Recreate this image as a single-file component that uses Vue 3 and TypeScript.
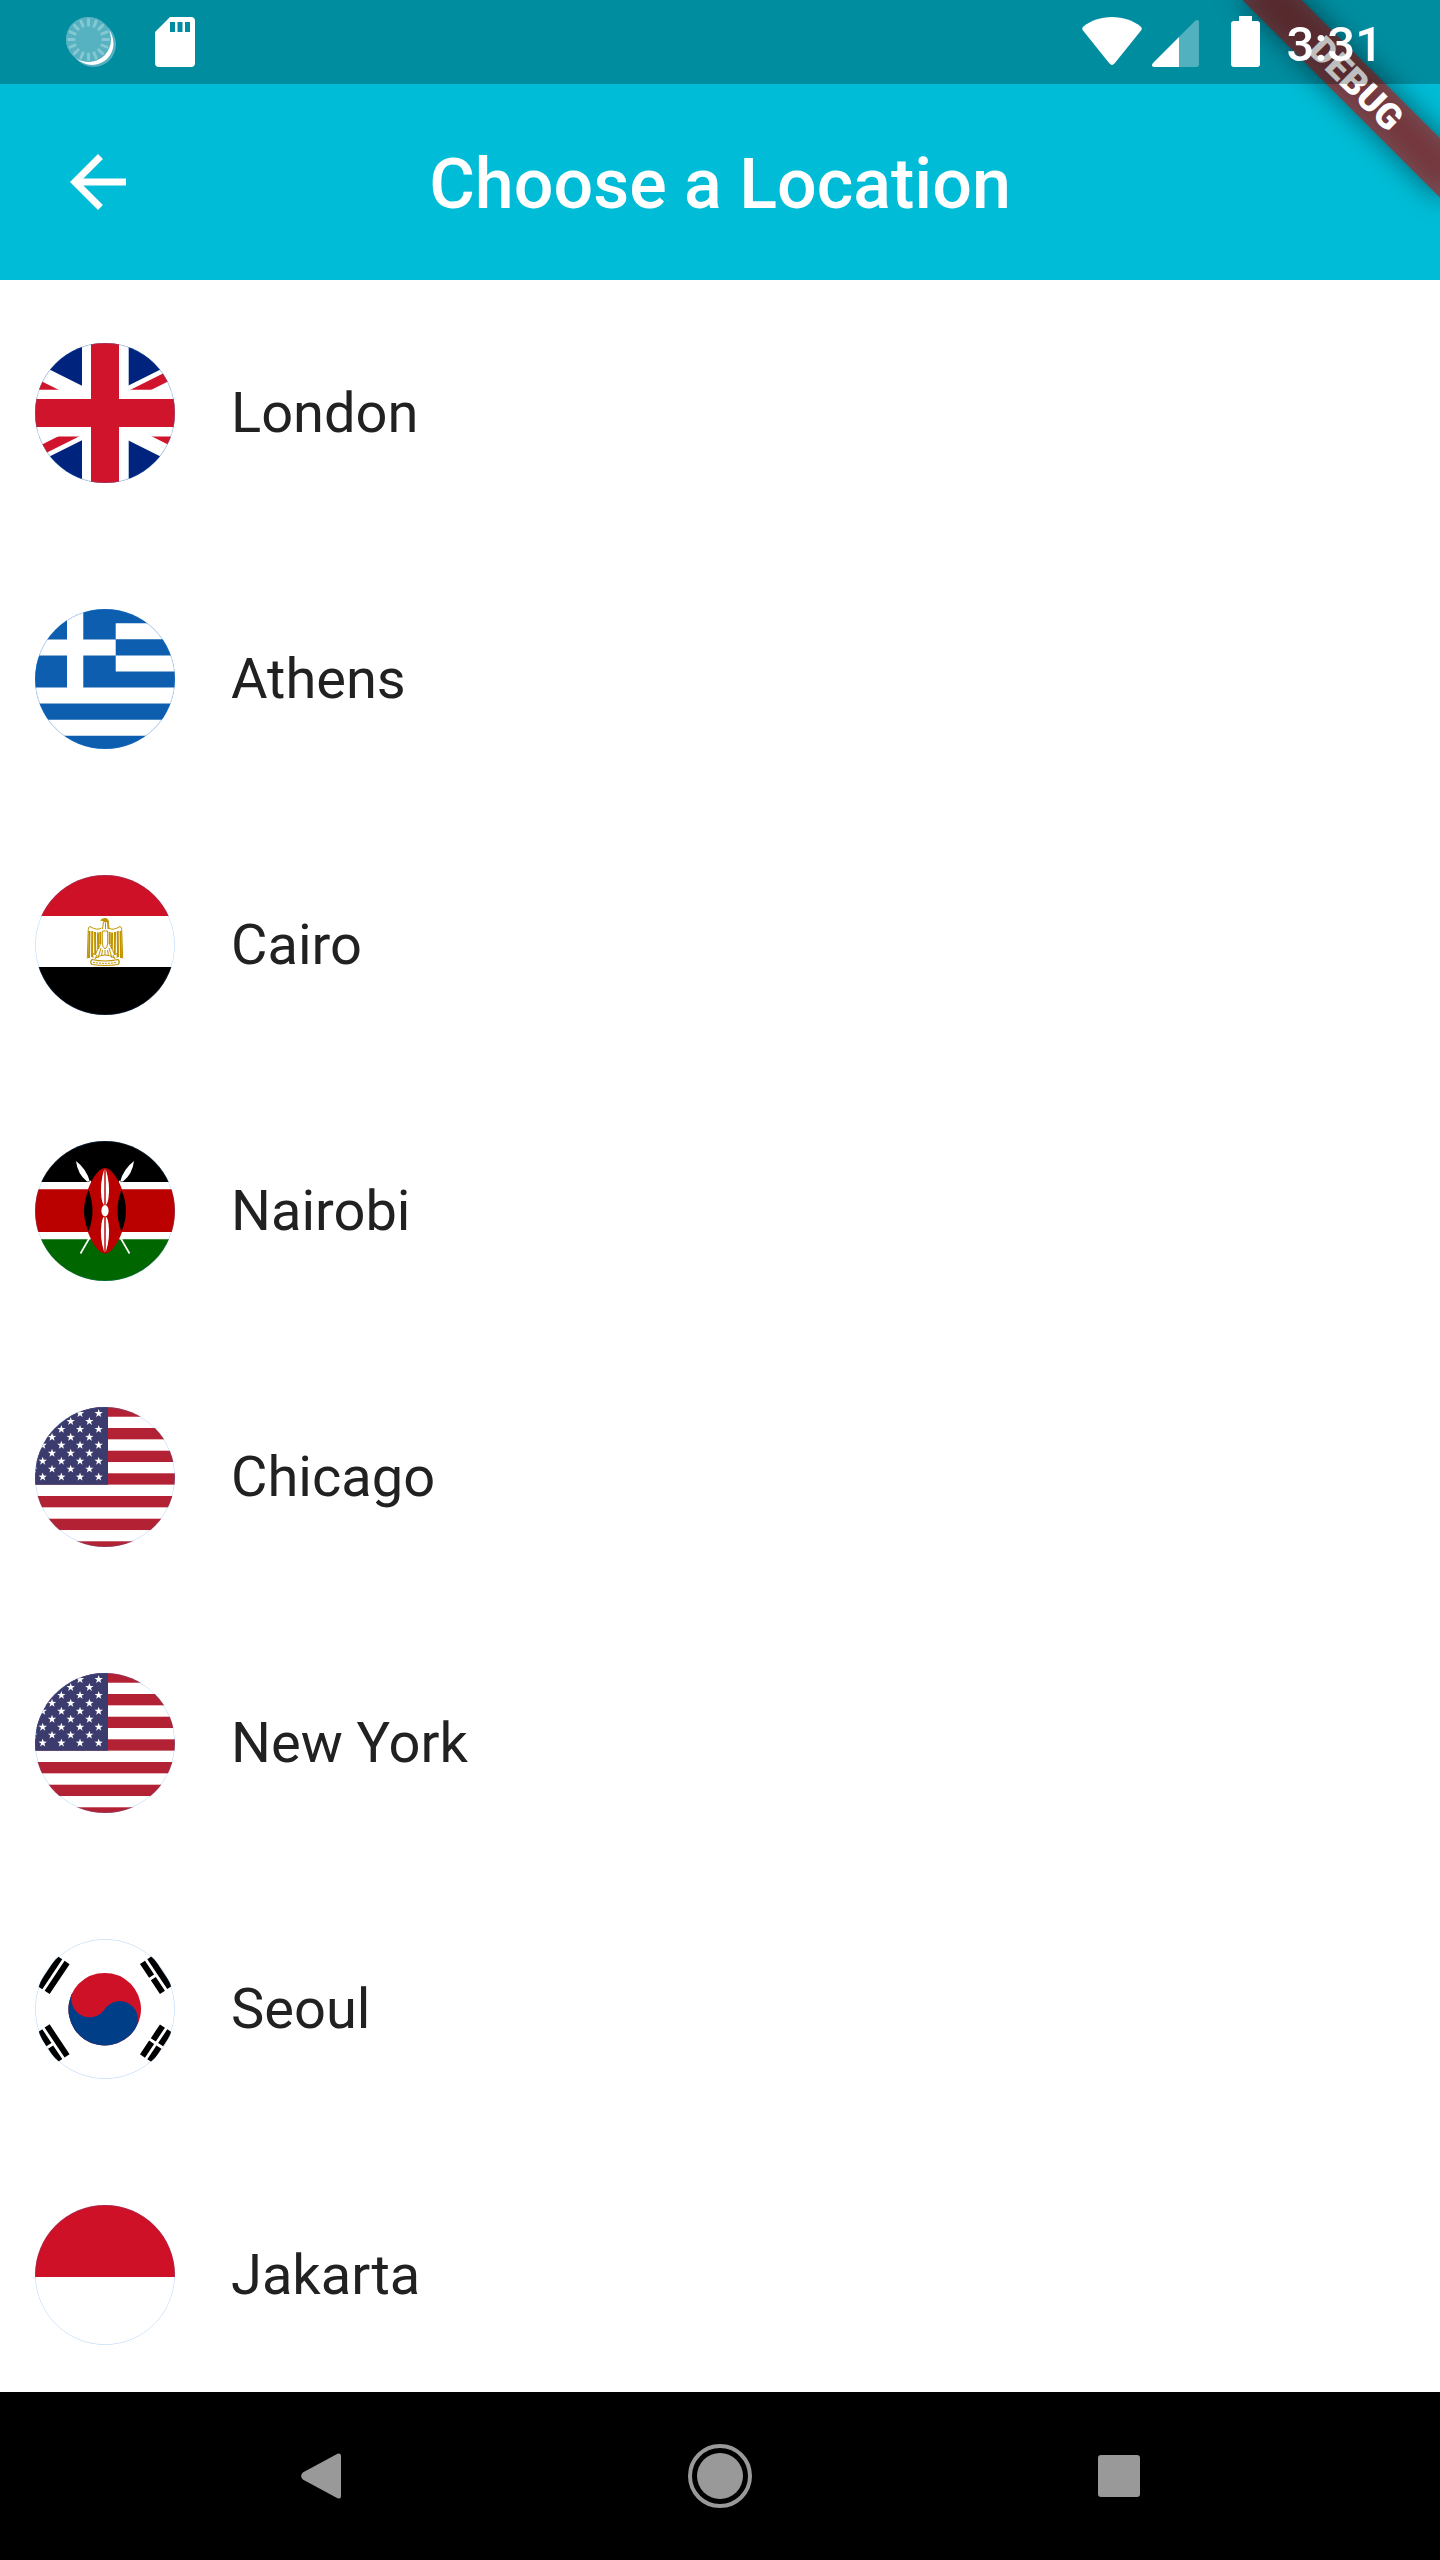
<script setup lang="ts">
type Flag = 'uk' | 'greece' | 'egypt' | 'kenya' | 'usa' | 'korea' | 'indonesia'

interface Place {
  name: string
  flag: Flag
}

interface Point {
  x: number
  y: number
}

const places: Place[] = [
  { name: 'London', flag: 'uk' },
  { name: 'Athens', flag: 'greece' },
  { name: 'Cairo', flag: 'egypt' },
  { name: 'Nairobi', flag: 'kenya' },
  { name: 'Chicago', flag: 'usa' },
  { name: 'New York', flag: 'usa' },
  { name: 'Seoul', flag: 'korea' },
  { name: 'Jakarta', flag: 'indonesia' },
]

// Staggered grid of stars that fills the canton
const stars: Point[] = []
for (let row = 0; row < 9; row++) {
  for (let col = -1; col < 7; col++) {
    if ((row + col) % 2 === 0) stars.push({ x: 7.7 + col * 9.33, y: 6.4 + row * 7.95 })
  }
}

const starPoints = Array.from({ length: 10 }, (_, i) => {
  const radius = i % 2 === 0 ? 4.4 : 1.75
  const angle = (i * Math.PI) / 5
  return `${(radius * Math.sin(angle)).toFixed(2)},${(-radius * Math.cos(angle)).toFixed(2)}`
}).join(' ')

const redStripes = [-1.6, 21, 43.7, 66.3, 89, 111.7, 134.3]
const rays = Array.from({ length: 16 }, (_, i) => i * 22.5)
</script>

<template>
  <div class="screen">
    <div class="status">
      <svg class="status-icon" width="50" height="52" viewBox="66 16 50 52" aria-hidden="true">
        <path d="M88.5 39.5L93.5 44.5" stroke="#56b1c0" stroke-width="45" stroke-linecap="round" />
        <circle cx="92" cy="43.5" r="21.5" fill="#fff" />
        <circle cx="88.5" cy="39.5" r="22.5" fill="#56b1c0" />
        <g stroke="#86c8d2" stroke-width="3" stroke-linecap="round">
          <path v-for="angle in rays" :key="angle" d="M88.5 25v-5.5" :transform="`rotate(${angle} 88.5 39.5)`" />
        </g>
      </svg>
      <svg class="status-icon sd" width="40" height="52" viewBox="155 16 40 52" aria-hidden="true">
        <path fill="#fff" fill-rule="evenodd" d="M170 17h21a4 4 0 0 1 4 4v42a4 4 0 0 1-4 4h-32a4 4 0 0 1-4-4V32zM170 22v10h5V22zM177.5 22v10h5V22zM185 22v10h5V22z" />
      </svg>
      <span class="spacer"></span>
      <svg class="status-icon" width="60" height="52" viewBox="1082 16 60 52" aria-hidden="true">
        <path fill="#fff" d="M1083 30.5Q1081.300 28.3 1083.500 26.5C1091 20.5 1101 17 1112 17S1133 20.5 1140.500 26.5Q1142.700 28.3 1141 30.5L1114.300 63.8Q1112 66 1109.700 63.8z" />
      </svg>
      <svg class="status-icon signal" width="48" height="52" viewBox="1152 16 48 52" aria-hidden="true">
        <path fill="#fff" fill-opacity=".32" d="M1179 37L1195 21Q1199 18 1199 23V64Q1199 67 1196 67H1179z" />
        <path fill="#fff" d="M1179 37V67H1154Q1150.500 66.5 1153 63z" />
      </svg>
      <svg class="status-icon battery" width="29" height="52" viewBox="1231 16 29 52" aria-hidden="true">
        <path fill="#fff" d="M1239 16h13v5h5a3 3 0 0 1 3 3v40a3 3 0 0 1-3 3h-23a3 3 0 0 1-3-3V24a3 3 0 0 1 3-3h5z" />
      </svg>
      <time class="clock">3:31</time>
    </div>

    <header class="app-bar">
      <button class="back" type="button" aria-label="Back">
        <svg width="84" height="84" viewBox="0 0 24 24" aria-hidden="true">
          <path fill="#fff" d="M20 11H7.83l5.59-5.59L12 4l-8 8 8 8 1.41-1.41L7.83 13H20v-2z" />
        </svg>
      </button>
      <h1 class="title">Choose a Location</h1>
    </header>

    <div class="ribbon-corner">
      <div class="ribbon"><span class="ribbon-text">DEBUG</span></div>
    </div>

    <ul class="places">
      <li v-for="place in places" :key="place.name">
        <button class="place" type="button">
          <svg class="flag" width="140" height="140" viewBox="0 0 140 140" aria-hidden="true">
            <g v-if="place.flag === 'uk'">
              <path fill="#00247d" d="M0 0h140v140H0z" />
              <path stroke="#fff" stroke-width="28" d="M-70 0L210 140M210 0L-70 140" />
              <path fill="#cf142b" d="M-70 0L70 70V80.4L-70 10.4zM210 0L70 70V59.6L210 -10.4zM210 140L70 70V59.6L210 129.6zM-70 140L70 70V80.4L-70 150.4z" />
              <path fill="#fff" d="M47 0h46.7v46.7H140v46.7H93.7V140H47V93.4H0V46.7h47z" />
              <path fill="#cf142b" d="M56 0h28v56h56v28H84v56H56V84H0V56h56z" />
            </g>
            <g v-else-if="place.flag === 'greece'">
              <path fill="#0d5eaf" d="M0 0h140v140H0z" />
              <path fill="#fff" d="M80.7 14.3H140v16H80.7zM80.7 46.5H140v16H80.7zM0 78.6h140v16H0zM0 110.8h140v16H0zM32 0h16.3v30.5h32.4v16H48.3v32.2H32V46.5H0v-16h32z" />
            </g>
            <g v-else-if="place.flag === 'egypt'">
              <path fill="#fff" d="M0 0h140v140H0z" />
              <path fill="#ce1126" d="M0 0h140v41H0z" />
              <path d="M0 92h140v48H0z" />
              <g fill="none" stroke="#c09300" stroke-width="1">
                <path fill="#c09300" stroke="none" d="M65 45.5Q67 42.5 70.5 43Q73.5 43.5 74 47L73.5 54H72.5L72 47Q69.5 48.5 68.5 46.2z" />
                <path d="M68.5 46.5L67.5 54M70.5 48V54M73.8 50V54" />
                <path d="M66.5 53Q62 56 55 51.5Q53 52 53.2 57L52.3 83.5M73.5 53Q78 56 85 51.5Q87 52 86.800 57L87.7 83.5" />
                <path stroke-width="2" d="M54.5 56L54 83M57.3 56L57 82M60 57L60.3 80M62.9 57.5L63.2 74M65.3 57V69M85.5 56L86 83M82.7 56L83 82M80 57L79.7 80M77.1 57.5L76.8 74M74.7 57V69" />
                <path d="M67.3 56H72.7V68Q72.7 72 70 74Q67.3 72 67.3 68z" />
                <path d="M65.5 69L61 78M74.5 69L79 78M66 73L63 83M74 73L77 83M67.5 75L66.5 81M72.5 75L73.5 81M70 75V80" />
                <path d="M59 78Q57 80 58 83M81 78Q83 80 82 83M60.5 83Q70 77 79.5 83M62 80L60 84M78 80L80 84" />
                <path stroke-width="1.2" d="M57 84.5Q54.5 87 57 89.5Q70 91.5 83 89.5Q85.5 87 83 84.5Q70 87.5 57 84.5z" />
                <path stroke-dasharray="2 1" d="M58 87.3Q70 89.5 82 87.3" />
              </g>
            </g>
            <g v-else-if="place.flag === 'kenya'">
              <path fill="#fff" d="M0 0h140v140H0z" />
              <path d="M0 0h140v41H0z" />
              <path fill="#b00" d="M0 48.3h140v42.7H0z" />
              <path fill="#060" d="M0 98.3h140V140H0z" />
              <path stroke="#fff" stroke-width="1.7" d="M55 40L61 51M85 40L79 51M45.5 112.5L55 96M94.5 112.5L85 96" />
              <path fill="#fff" d="M41 20Q51.5 28 54.8 40.5H52Q42.5 33 41 20zM99 20Q88.5 28 85.2 40.5H88Q97.5 33 99 20z" />
              <path fill="#b00" d="M70 27C61 27 49 50 49 69.7S61 112.5 70 112.5S91 89 91 69.7S79 27 70 27z" />
              <path d="M53.5 49Q44.5 70 53.5 90.5Q61.5 70 53.5 49zM86.5 49Q95.5 70 86.5 90.5Q78.5 70 86.5 49z" />
              <path fill="#fff" d="M69.3 28V64Q67.5 63 66.5 57Q64.5 43 69.3 28zM70.7 28V64Q72.5 63 73.5 57Q75.5 43 70.7 28zM69.3 111.5V75.5Q67.5 76.5 66.5 82.5Q64.5 96.5 69.3 111.5zM70.7 111.5V75.5Q72.5 76.5 73.5 82.5Q75.5 96.5 70.7 111.5z" />
              <ellipse cx="70" cy="69.7" rx="3.6" ry="5.6" fill="#fff" />
            </g>
            <g v-else-if="place.flag === 'usa'">
              <path fill="#fff" d="M0 0h140v140H0z" />
              <rect v-for="top in redStripes" :key="top" x="0" :y="top" width="140" height="11.33" fill="#b22234" />
              <path fill="#3c3b6e" d="M0 0h73v77.7H0z" />
              <polygon v-for="(star, i) in stars" :key="i" :points="starPoints" :transform="`translate(${star.x} ${star.y})`" fill="#fff" />
            </g>
            <g v-else-if="place.flag === 'korea'">
              <path fill="#fff" d="M0 0h140v140H0z" />
              <g transform="translate(69.7 70.2) rotate(33.69)">
                <circle r="36.3" fill="#ce1126" />
                <path fill="#003f87" d="M-36.3 0A36.3 36.3 0 0 0 36.3 0A18.15 18.15 0 0 0 0 0A18.15 18.15 0 0 1 -36.3 0z" />
                <path d="M-60.2 -18h6v36h-6zM-69 -18h6v36h-6zM54.4 -18h6v16.5h-6zM54.4 1.5h6V18h-6zM63.2 -18h6v16.5h-6zM63.2 1.5h6V18h-6z" />
              </g>
              <g transform="translate(69.7 70.2) rotate(-33.69)">
                <path d="M-60.2 -18h6v36h-6zM-69 -18h6v16.5h-6zM-69 1.5h6V18h-6zM54.4 -18h6v16.5h-6zM54.4 1.5h6V18h-6zM63.2 -18h6v36h-6z" />
              </g>
            </g>
            <g v-else>
              <path fill="#fff" d="M0 0h140v140H0z" />
              <path fill="#ce1126" d="M0 0h140v72H0z" />
            </g>
            <circle cx="70" cy="70" r="69.7" fill="none" stroke="#2080e0" stroke-opacity=".3" stroke-width=".8" />
          </svg>
          <span>{{ place.name }}</span>
        </button>
      </li>
    </ul>

    <nav class="system-nav" aria-label="System">
      <button type="button" aria-label="Back">
        <svg width="64" height="64" viewBox="0 0 64 64" aria-hidden="true">
          <path fill="#999" d="M13.8 28.5L48.5 9.8Q52 8.5 52 12V52Q52 55.5 48.5 54.2L13.8 35.5Q10.5 32 13.8 28.5z" />
        </svg>
      </button>
      <button type="button" aria-label="Home">
        <svg width="64" height="64" viewBox="0 0 64 64" aria-hidden="true">
          <circle cx="32" cy="32" r="30" fill="none" stroke="#999" stroke-width="4" />
          <circle cx="32" cy="32" r="23" fill="#999" />
        </svg>
      </button>
      <button type="button" aria-label="Recent apps">
        <svg width="64" height="64" viewBox="0 0 64 64" aria-hidden="true">
          <rect x="11" y="11" width="42" height="42" rx="3" fill="#999" />
        </svg>
      </button>
    </nav>
  </div>
</template>

<style>
body {
  margin: 0;
}
</style>

<style scoped>
.screen {
  position: relative;
  display: flex;
  flex-direction: column;
  height: 100vh;
  overflow: hidden;
  background: #fff;
  color: #212121;
  font-family: Roboto, "Liberation Sans", sans-serif;
}

button {
  margin: 0;
  padding: 0;
  border: 0;
  background: none;
  color: inherit;
  font: inherit;
  cursor: pointer;
}

svg {
  display: block;
}

.status {
  position: relative;
  z-index: 2;
  display: flex;
  flex: none;
  align-items: center;
  box-sizing: border-box;
  height: 84px;
  margin-bottom: -84px;
  padding: 0 57px 0 66px;
  background: rgba(0, 0, 0, 0.25);
  color: #fff;
}

.status-icon {
  flex: none;
}

.sd {
  margin-left: 39px;
}

.spacer {
  flex: 1;
}

.signal {
  margin-left: 10px;
}

.battery {
  margin-left: 31px;
}

.clock {
  margin-left: 27px;
  padding-top: 6px;
  font-size: 49px;
  font-weight: 500;
  line-height: 56px;
}

.app-bar {
  display: grid;
  flex: none;
  grid-template-columns: 1fr auto 1fr;
  align-items: center;
  box-sizing: border-box;
  height: 280px;
  padding: 84px 56px 0;
  background: #00bcd6;
  color: #fff;
}

.back {
  justify-self: start;
}

.title {
  margin: 0;
  padding-top: 4px;
  font-size: 70px;
  font-weight: 500;
  line-height: 84px;
}

.ribbon-corner {
  position: absolute;
  z-index: 1;
  top: 0;
  right: 0;
  width: 280px;
  height: 280px;
  overflow: hidden;
  pointer-events: none;
}

.ribbon {
  position: absolute;
  top: 63px;
  right: -56px;
  width: 280px;
  height: 42px;
  transform: rotate(45deg);
}

.ribbon::before {
  position: absolute;
  inset: 0;
  background: rgba(0, 0, 0, 0.5);
  content: "";
  filter: blur(14px);
}

.ribbon-text {
  position: relative;
  display: block;
  background: rgba(183, 28, 28, 0.63);
  color: #fff;
  font-size: 36px;
  font-weight: 900;
  line-height: 42px;
  text-align: center;
}

.places {
  flex: 1;
  min-height: 0;
  margin: 0;
  padding: 0;
  overflow-y: auto;
  list-style: none;
  scrollbar-width: none;
}

.place {
  display: flex;
  gap: 56px;
  align-items: center;
  width: 100%;
  padding: 63px 35px;
  font-size: 56px;
  line-height: 66px;
  text-align: left;
}

.flag {
  flex: none;
  border-radius: 50%;
}

.system-nav {
  display: grid;
  flex: none;
  grid-template-columns: repeat(3, 1fr);
  height: 168px;
  padding: 0 121px;
  background: #000;
}

.system-nav button {
  display: flex;
  align-items: center;
  justify-content: center;
}
</style>
